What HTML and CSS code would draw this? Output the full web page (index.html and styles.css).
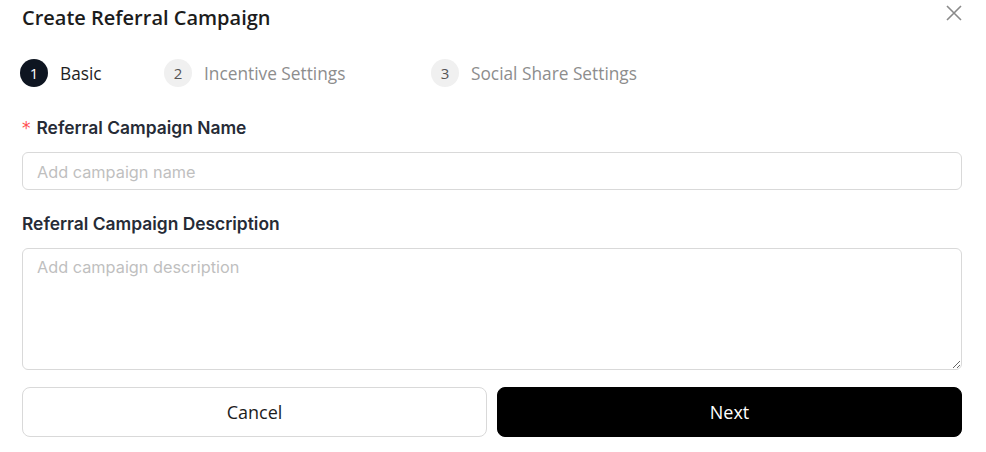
FILE: index.html
```html
<!DOCTYPE html>
<html>
<head>
<meta charset="utf-8">
<link rel="stylesheet" href="styles.css">
</head>
<body>
<div class="modal">
  <div class="header">
    <h1 class="title">Create Referral Campaign</h1>
    <button class="close" aria-label="Close">
      <svg width="16" height="16" viewBox="0 0 16 16"><path d="M1 1L15 15M15 1L1 15" stroke="#8a8a8a" stroke-width="1.6" fill="none"/></svg>
    </button>
  </div>
  <div class="steps">
    <div class="step step-1 active"><span class="num">1</span><span class="label">Basic</span></div>
    <div class="step step-2"><span class="num">2</span><span class="label">Incentive Settings</span></div>
    <div class="step"><span class="num">3</span><span class="label">Social Share Settings</span></div>
  </div>
  <div class="field field-name">
    <label class="flabel"><span class="req">*</span>Referral Campaign Name</label>
    <input class="input" type="text" placeholder="Add campaign name">
  </div>
  <div class="field field-desc">
    <label class="flabel">Referral Campaign Description</label>
    <textarea class="textarea" placeholder="Add campaign description"></textarea>
  </div>
  <div class="actions">
    <button class="btn btn-cancel">Cancel</button>
    <button class="btn btn-next">Next</button>
  </div>
</div>
</body>
</html>
```
FILE: styles.css
```css
* { box-sizing: border-box; }
html, body { margin: 0; padding: 0; background: #fff; }
body { width: 986px; height: 452px; overflow: hidden; }
.modal { padding: 4px 24px 0 22px; font-family: "Open Sans", sans-serif; }
.header { display: flex; justify-content: space-between; align-items: flex-start; height: 54px; }
.title { margin: 0; font-size: 20px; font-weight: 600; color: #1c1c1c; line-height: 28px; }
.close { border: none; background: none; padding: 0; margin: 1px 0 0 0; width: 16px; height: 16px; cursor: pointer; display: block; }
.close svg { display: block; }
.steps { display: flex; align-items: center; height: 30px; margin: 0 0 0 -2px; }
.step { display: flex; align-items: center; gap: 12px; }
.step-1 { width: 144px; }
.step-2 { width: 267px; }
.num { width: 28px; height: 28px; border-radius: 50%; background: #f0f0f0; color: #555; font-size: 15px; display: flex; align-items: center; justify-content: center; }
.label { font-size: 17.3px; color: #8d8d8d; }
.active .num { background: #0e1521; color: #fff; }
.active .label { color: #1e1e1e; }
.field-name { margin-top: 28px; }
.field-desc { margin-top: 22px; }
.flabel { display: block; font-family: Inter, sans-serif; font-size: 17.4px; font-weight: 600; color: #262b36; line-height: 22px; height: 23px; padding-top: 1px; margin-bottom: 13px; letter-spacing: 0; }
.req { color: #ff4d4f; margin-right: 6px; font-family: "DejaVu Sans", sans-serif; font-size: 17px; font-weight: 400; line-height: 20px; }
.input, .textarea { display: block; width: 100%; border: 1px solid #d9d9d9; border-radius: 6px; font-family: Inter, sans-serif; font-size: 16.3px; color: #333; padding: 0 14px; outline: none; background: #fff; }
.input { height: 38px; padding-top: 1px; }
.textarea { height: 122px; padding-top: 8px; resize: vertical; }
.input::placeholder, .textarea::placeholder { color: #bfbfbf; }
.actions { display: flex; gap: 10px; margin-top: 17px; }
.btn { flex: 1; height: 50px; border-radius: 8px; font-family: "Open Sans", sans-serif; font-size: 18px; cursor: pointer; }
.btn-cancel { background: #fff; border: 1px solid #d9d9d9; color: #1c1c1c; }
.btn-next { background: #000; border: 1px solid #000; color: #fff; }
```
